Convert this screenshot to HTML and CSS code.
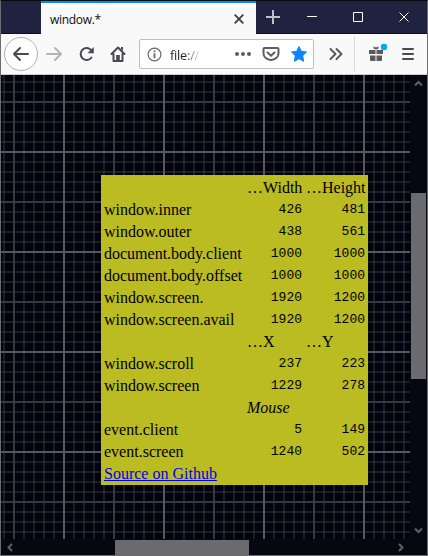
FILE: index.html
```html
<!DOCTYPE html>
<html lang="en">
<head>
<meta charset="utf-8">
<title>window.*</title>
<link rel="stylesheet" href="styles.css">
</head>
<body>
<div class="window">
  <header class="titlebar">
    <div class="tab"><span class="tab-title">window.*</span>
      <svg class="tab-close" width="10" height="10" viewBox="0 0 10 10"><path d="M.7.7l8.6 8.6M9.3.7L.7 9.3"/></svg>
    </div>
    <svg class="controls" width="171" height="33" viewBox="256 1 171 33">
      <path class="plus" d="M266 17h14M273 10v14"/>
      <path class="ctl" d="M307 16.5h10M353.500 12.500h9v9h-9z"/>
      <path class="ctl thin" d="M399.500 12.500l9 9M408.500 12.500l-9 9"/>
    </svg>
  </header>
  <nav class="toolbar">
    <svg class="nav-icons" width="138" height="40" viewBox="1 34 138 40">
      <circle cx="21" cy="54" r="16.500" fill="#fff" stroke="#b1b1b1"/>
      <g fill="none" stroke="#4a4a4d" stroke-width="2" stroke-linecap="round" stroke-linejoin="round">
        <path d="M28 54H14M20 48l-6 6 6 6"/>
        <path stroke="#b4b4b4" d="M47 54h14M55 48l6 6-6 6"/>
        <path d="M91.300 50.200a6 6 0 1 0 .2 7.300"/>
        <path d="M111.500 54l6.500-6.500 6.500 6.500M113.500 54v7h9v-7"/>
      </g>
      <path fill="#4a4a4d" d="M93.800 47v6.300h-6.300zM116.200 55h3.600v6.500h-3.600zM121 47h2v4l-2-2z"/>
    </svg>
    <div class="urlbar">
      <svg width="15" height="15" viewBox="0 0 15 15"><circle cx="7.500" cy="7.500" r="6.400" fill="none" stroke="#6a6a6d" stroke-width="1.200"/><path fill="#6a6a6d" d="M6.600 6.300h1.800v5H6.600zM6.600 3.500h1.800v1.800H6.600z"/></svg>
      <span class="url">file://</span>
      <svg class="page-actions" width="75" height="20" viewBox="233 44 75 20">
        <g fill="#5e5e61"><circle cx="237" cy="54" r="2"/><circle cx="243" cy="54" r="2"/><circle cx="249" cy="54" r="2"/></g>
        <path d="M264.500 48h13q1 0 1 1v4.500a7.500 6.500 0 0 1-15 0V49q0-1 1-1z" fill="none" stroke="#5e5e61" stroke-width="2"/>
        <path d="M267.500 52.500l3.500 3.200 3.500-3.200" fill="none" stroke="#5e5e61" stroke-width="2" stroke-linecap="round"/>
        <path fill="#0a84ff" stroke="#0a84ff" stroke-linejoin="round" d="M299 46.500l2.300 4.800 5.200.7-3.800 3.700.9 5.600-4.600-2.600-4.600 2.600.9-5.600-3.800-3.700 5.200-.7z"/>
      </svg>
    </div>
    <svg class="tools" width="113" height="40" viewBox="314 34 113 40">
      <path d="M330.500 49l5 5-5 5M336.500 49l5 5-5 5" fill="none" stroke="#5a5a5d" stroke-width="2" stroke-linecap="round" stroke-linejoin="round"/>
      <path d="M354.500 37v34" stroke="#d7d7db"/>
      <path fill="#5a5a5d" d="M369 50h6.500v4H369zM376.500 50h6.500v4h-6.500zM370 55.500h5.500V61h-4.500q-1 0-1-1zM376.500 55.500h5.500V60q0 1-1 1h-4.500zM373.500 46.500l2.500 1 2.500-1v2l-2.500 1-2.500-1z"/>
      <circle cx="384" cy="47" r="3.200" fill="#00a8f4"/>
      <path d="M403 49h10M403 54h10M403 59h10" stroke="#4a4a4d" stroke-width="2" stroke-linecap="round"/>
    </svg>
  </nav>
  <div class="viewport">
    <main class="page">
      <table>
        <colgroup><col class="c-name"><col class="c-w"><col class="c-h"></colgroup>
        <tr><td></td><td>…Width</td><td>…Height</td></tr>
        <tr><td>window.inner</td><td class="n">426</td><td class="n">481</td></tr>
        <tr><td>window.outer</td><td class="n">438</td><td class="n">561</td></tr>
        <tr><td>document.body.client</td><td class="n">1000</td><td class="n">1000</td></tr>
        <tr><td>document.body.offset</td><td class="n">1000</td><td class="n">1000</td></tr>
        <tr><td>window.screen.</td><td class="n">1920</td><td class="n">1200</td></tr>
        <tr><td>window.screen.avail</td><td class="n">1920</td><td class="n">1200</td></tr>
        <tr><td></td><td>…X</td><td>…Y</td></tr>
        <tr><td>window.scroll</td><td class="n">237</td><td class="n">223</td></tr>
        <tr><td>window.screen</td><td class="n">1229</td><td class="n">278</td></tr>
        <tr><td></td><td><em>Mouse</em></td><td></td></tr>
        <tr><td>event.client</td><td class="n">5</td><td class="n">149</td></tr>
        <tr><td>event.screen</td><td class="n">1240</td><td class="n">502</td></tr>
        <tr><td><a href="#">Source on Github</a></td><td></td><td></td></tr>
      </table>
    </main>
    <div class="vbar">
      <svg class="arrow" width="15" height="17" viewBox="0 0 15 17"><path d="M4 10.500l3.500-3.500 3.500 3.500"/></svg>
      <div class="vthumb"></div>
      <svg class="arrow end" width="15" height="17" viewBox="0 0 15 17"><path d="M4 6.500l3.500 3.500 3.500-3.500"/></svg>
    </div>
    <div class="hbar">
      <svg class="arrow" width="17" height="15" viewBox="0 0 17 15"><path d="M11 4L7.500 7.500 11 11"/></svg>
      <div class="hthumb"></div>
      <svg class="arrow end" width="17" height="15" viewBox="0 0 17 15"><path d="M6 4l3.500 3.500L6 11"/></svg>
    </div>
  </div>
</div>
</body>
</html>
```
FILE: styles.css
```css
* { box-sizing: border-box; }
body { margin: 0; overflow: hidden; }
svg { display: block; flex: none; }
.window {
  width: 428px;
  height: 556px;
  border: 1px solid #6c6c6e;
  border-top-color: #0b0b14;
  display: flex;
  flex-direction: column;
  background: #02040e;
  font-family: "Open Sans", "Noto Sans", sans-serif;
}
.titlebar {
  height: 33px;
  flex: none;
  display: flex;
  background: #202340;
  padding-left: 40px;
  border-bottom: 1px solid #100b24;
}
.tab {
  width: 215px;
  height: 33px;
  flex: none;
  display: flex;
  align-items: center;
  justify-content: space-between;
  padding: 0 12px 0 9px;
  border-top: 2px solid #0a84ff;
  background: #f9f9fa;
  font-size: 12px;
  color: #0c0c0d;
}
.tab-title { letter-spacing: -0.3px; padding-top: 1px; }
.tab-close { fill: none; stroke: #3c3c40; stroke-width: 1.800; }
.controls { fill: none; }
.plus { stroke: #c0c0cb; stroke-width: 2; }
.ctl { stroke: #fff; }
.thin { stroke-width: 1; }
.toolbar {
  height: 41px;
  flex: none;
  display: flex;
  align-items: center;
  background: #f9f9fa;
  border-bottom: 1px solid #ccc;
}
.urlbar {
  width: 175px;
  height: 30px;
  flex: none;
  display: flex;
  align-items: center;
  padding-left: 7px;
  background: #fff;
  border: 1px solid #bfbfc2;
  border-radius: 2px;
}
.url {
  width: 29px;
  margin-left: 8px;
  padding-top: 1px;
  font-size: 13px;
  letter-spacing: -0.3px;
  background: linear-gradient(90deg, #222 50%, rgba(34, 34, 34, 0.15));
  background-clip: text;
  color: transparent;
}
.page-actions { margin-left: 34px; }
.viewport {
  flex: 1;
  display: grid;
  grid-template-columns: 409px 17px;
  grid-template-rows: 464px 16px;
  background: #050811;
}
.page {
  padding: 100px 0 0 100px;
  background:
    linear-gradient(90deg, #58585b 2px, transparent 2px) 62px 0 / 100px 100px,
    linear-gradient(#58585b 2px, transparent 2px) 0 76px / 100px 100px,
    linear-gradient(90deg, #38393c 2px, transparent 2px) 12px 0 / 100px 100px,
    linear-gradient(#38393c 2px, transparent 2px) 0 26px / 100px 100px,
    linear-gradient(90deg, rgba(70, 70, 70, 0.4) 2px, transparent 2px) 2px 0 / 10px 10px,
    linear-gradient(rgba(70, 70, 70, 0.4) 2px, transparent 2px) 0 6px / 10px 10px,
    #01030e;
}
table {
  width: 267px;
  table-layout: fixed;
  border-spacing: 2px;
  background: #bbbb22;
  font: 16px/18px "Liberation Serif", serif;
  color: #000;
}
.c-name { width: 141px; }
.c-w { width: 57px; }
.c-h { width: 61px; }
td { height: 20px; padding: 2px 1px 0; white-space: nowrap; }
.n { font: 13px/18px "Liberation Mono", monospace; text-align: right; }
a { color: #00e; }
.vbar {
  display: flex;
  flex-direction: column;
  padding: 0 1px;
}
.arrow { fill: none; stroke: #606066; stroke-width: 2; }
.vthumb { height: 186px; margin-top: 101px; background: #6b6b6f; }
.vbar .end { margin-top: auto; }
.hbar { display: flex; width: 409px; padding-top: 1px; }
.hthumb { width: 134px; height: 15px; margin-left: 97px; background: #6b6b6f; }
.hbar .end { margin-left: auto; }
```
